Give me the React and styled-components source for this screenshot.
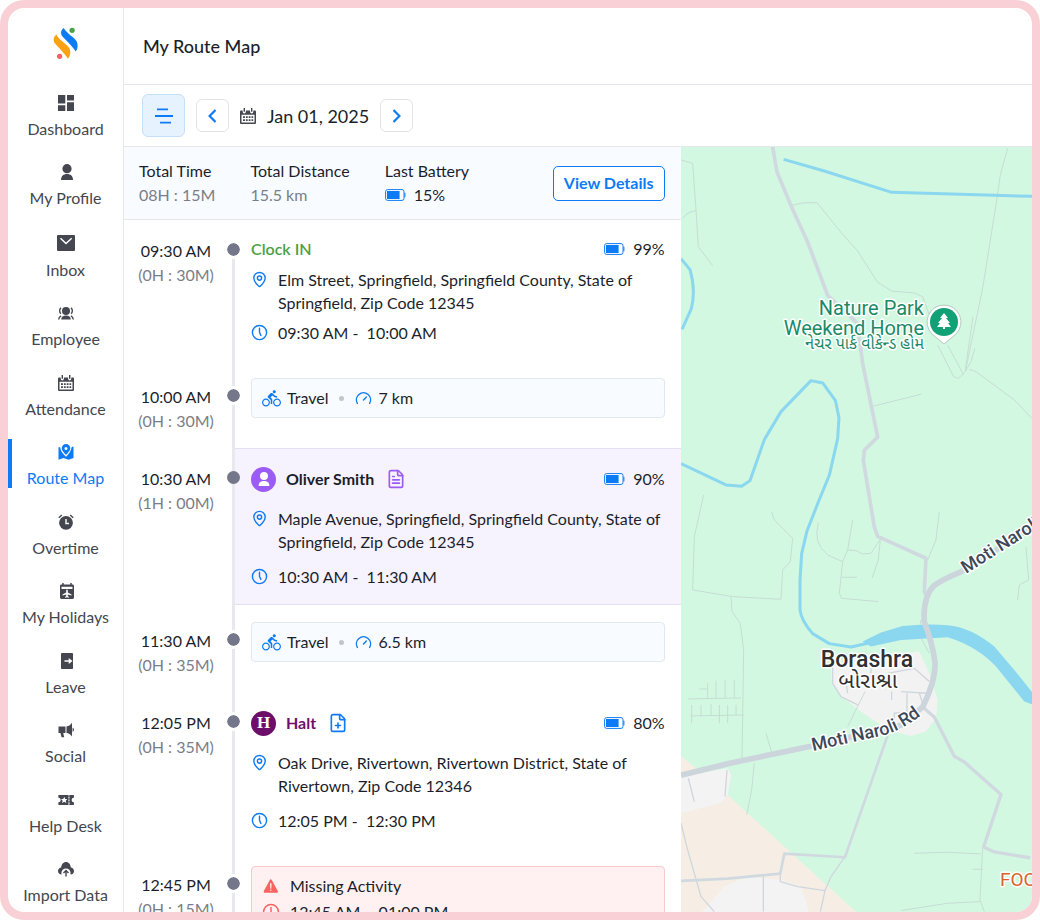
import React from "react";
import styled, { createGlobalStyle } from "styled-components";
import { Clock5, FilePlus, FileText, Gauge, MapPin } from "lucide-react";
import { MdDirectionsBike } from "react-icons/md";
import { IoWarning } from "react-icons/io5";

const colors = {
  ink: "#1c1f2b",
  text: "#44474f",
  muted: "#7b7e88",
  blue: "#0d7bf5",
  green: "#4ba146",
  purple: "#9b5cf6",
  plum: "#6d0f6a",
  red: "#f96460",
  line: "#e6e7ec",
  dot: "#74778a",
  pink: "#f8d0d5",
};

const GlobalStyle = createGlobalStyle`
  *, *::before, *::after {
    box-sizing: border-box;
  }
  body {
    margin: 0;
    background: white;
    color: ${colors.ink};
    font-family: Lato, "Open Sans", sans-serif;
    font-size: 16px;
    line-height: 24px;
  }
  button {
    font: inherit;
    cursor: pointer;
  }
  svg {
    flex: none;
  }
`;

const Frame = styled.div`
  display: flex;
  height: 100vh;
  overflow: hidden;
  background: white;
  border: 8px solid ${colors.pink};
  border-radius: 24px;
`;

/* ---------- sidebar ---------- */

const Sidebar = styled.aside`
  display: flex;
  flex: none;
  flex-direction: column;
  align-items: center;
  width: 116px;
  padding: 19px 0 7px;
  border-right: 1px solid ${colors.line};
`;

const Nav = styled.nav`
  display: flex;
  flex: 1;
  flex-direction: column;
  justify-content: space-between;
  width: 100%;
  padding-top: 30px;
`;

const NavLink = styled.a`
  display: flex;
  flex-direction: column;
  align-items: center;
  gap: 8px;
  padding: 5px 4px 0 0;
  border-left: 4px solid ${(p) => (p.$active ? colors.blue : "transparent")};
  color: ${(p) => (p.$active ? colors.blue : colors.text)};
  line-height: 20px;
  text-decoration: none;
  white-space: nowrap;
`;

/* ---------- header and toolbar ---------- */

const Main = styled.main`
  display: flex;
  flex: 1;
  flex-direction: column;
  min-width: 0;
`;

const Header = styled.header`
  display: flex;
  flex: none;
  align-items: center;
  height: 77px;
  padding: 0 19px;
  border-bottom: 1px solid ${colors.line};
  h1 {
    margin: 0;
    font-size: 18px;
    font-weight: 500;
  }
`;

const Toolbar = styled.div`
  display: flex;
  flex: none;
  align-items: center;
  gap: 11px;
  height: 62px;
  padding: 0 18px;
  border-bottom: 1px solid ${colors.line};
`;

const IconButton = styled.button`
  display: flex;
  align-items: center;
  justify-content: center;
  width: ${(p) => (p.$filled ? 43 : 33)}px;
  height: ${(p) => (p.$filled ? 43 : 33)}px;
  padding: 0;
  border: 1px solid ${(p) => (p.$filled ? "#c3dffa" : "#e1e3e7")};
  border-radius: 6px;
  background: ${(p) => (p.$filled ? "#e7f2ff" : "white")};
  color: ${colors.blue};
`;

const CurrentDate = styled.div`
  display: flex;
  align-items: center;
  gap: 11px;
  color: ${colors.text};
`;

const DateText = styled.time`
  color: ${colors.ink};
  font-size: 18px;
`;

const Body = styled.div`
  display: grid;
  flex: 1;
  grid-template-columns: 19fr 12fr;
  min-height: 0;
`;

const Panel = styled.section`
  min-width: 0;
  overflow: hidden;
`;

/* ---------- summary ---------- */

const Summary = styled.div`
  display: flex;
  align-items: center;
  gap: 35px;
  height: 73px;
  padding: 0 16px 0 15px;
  border-bottom: 1px solid ${colors.line};
  background: #f8fbff;
`;

const Stat = styled.div`
  white-space: nowrap;
  p {
    margin: 0;
  }
`;

const StatValue = styled.p`
  color: ${(p) => (p.$dark ? colors.ink : colors.muted)};
`;

const DetailsButton = styled.button`
  height: 35px;
  margin-left: auto;
  padding: 0 10px;
  border: 1px solid ${colors.blue};
  border-radius: 5px;
  background: white;
  color: ${colors.blue};
  font-weight: 700;
  white-space: nowrap;
`;

const Battery = styled.span`
  display: inline-flex;
  align-items: center;
  gap: 8px;
`;

/* ---------- timeline ---------- */

const Timeline = styled.ol`
  margin: 0;
  padding: 0;
  list-style: none;
`;

const Row = styled.li`
  display: grid;
  grid-template-columns: 108px 3px 1fr;
`;

const Times = styled.div`
  padding: 19px 4px 0 0;
  text-align: center;
  span {
    display: block;
    color: ${colors.muted};
  }
`;

const Rail = styled.div`
  position: relative;
  background: linear-gradient(
    ${(p) => (p.$first ? "white" : "#e8e9ee")} 30px,
    #e8e9ee 30px
  );
  &::after {
    content: "";
    position: absolute;
    top: 20px;
    left: -8px;
    width: 19px;
    height: 19px;
    border: 3px solid ${(p) => (p.$tinted ? "transparent" : "white")};
    border-radius: 50%;
    background: ${colors.dot};
    background-clip: padding-box;
  }
`;

const Visit = styled.div`
  display: flex;
  flex-direction: column;
  gap: ${(p) => (p.$compact ? 7 : 12)}px;
  margin-bottom: ${(p) => (p.$tinted ? 5 : 0)}px;
  padding: 17px 16px ${(p) => (p.$tinted ? 17 : 22)}px;
  background: ${(p) => (p.$tinted ? "#f6f2fe" : "white")};
  box-shadow: ${(p) =>
    p.$tinted ? "inset 0 1px #e4e0f2, inset 0 -1px #e4e0f2" : "none"};
`;

const VisitHead = styled.div`
  display: flex;
  align-items: center;
  gap: 10px;
  min-height: ${(p) => (p.$compact ? 24 : 28)}px;
  margin-bottom: ${(p) => (p.$compact ? 0 : 2)}px;
  ${Battery} {
    margin-left: auto;
  }
  > svg {
    margin-left: 2px;
  }
`;

const VisitTitle = styled.strong`
  color: ${(p) => p.$color};
  font-weight: ${(p) => (p.$medium ? 600 : 700)};
`;

const Avatar = styled.span`
  display: flex;
  align-items: center;
  justify-content: center;
  width: 25px;
  height: 25px;
  border-radius: 50%;
  background: ${(p) => p.$color};
  color: white;
  font: 700 17px "Liberation Serif", serif;
`;

const Detail = styled.div`
  display: flex;
  gap: 10px;
  line-height: 23px;
  white-space: pre-wrap;
  svg {
    margin-top: 3px;
    color: ${(p) => p.$color || colors.blue};
  }
`;

const CardWrap = styled.div`
  padding: 12px 16px 30px;
`;

const TravelCard = styled.div`
  display: flex;
  align-items: center;
  gap: 6px;
  height: 40px;
  padding: 0 10px;
  border: 1px solid #e2e8f0;
  border-radius: 4px;
  background: #f8fbff;
  svg {
    color: ${colors.blue};
  }
`;

const Bullet = styled.span`
  width: 5px;
  height: 5px;
  margin: 0 5px;
  border-radius: 50%;
  background: #c2c5cb;
`;

const MissingCard = styled.div`
  display: flex;
  flex-direction: column;
  gap: 3px;
  padding: 7px 10px;
  border: 1px solid #f9c9cb;
  border-radius: 4px;
  background: #fff1f1;
`;

/* ---------- map ---------- */

const MapPane = styled.section`
  min-width: 0;
  overflow: hidden;
  background: #d2f8e1;
  svg {
    display: block;
    width: 100%;
    height: 100%;
  }
`;

const MapLabel = styled.text`
  fill: ${(p) => p.$color};
  stroke: white;
  stroke-width: 3px;
  stroke-linejoin: round;
  paint-order: stroke;
  font-family: Roboto, "Noto Sans Gujarati", "Noto Sans", sans-serif;
  font-size: ${(p) => p.$size}px;
  font-weight: ${(p) => (p.$medium ? 500 : 400)};
`;

/* ---------- icons ---------- */

const Logo = () => (
  <svg width="25" height="33" viewBox="160 82 76 98">
    <path
      fill="#0d7bf5"
      d="M193 84C183 90 182 102 189 110C196 118 216 136 229 155C236 147 237 131 230 122C221 110 201 100 193 84Z"
    />
    <path
      fill="#fba112"
      d="M170 104C160 112 160 124 167 132C174 141 193 158 205 177C214 168 215 152 208 143C199 131 178 121 170 104Z"
    />
    <circle cx="218" cy="91" r="8" fill="#4ba146" />
    <circle cx="180" cy="170" r="8" fill="#f96460" />
  </svg>
);

const Glyph = ({ children, height = 16, width = 16 }) => (
  <svg
    width={width}
    height={height}
    viewBox={`0 0 ${width} ${height}`}
    fill="currentColor"
    aria-hidden="true"
  >
    {children}
  </svg>
);

const CalendarIcon = () => (
  <Glyph>
    <path
      fillRule="evenodd"
      d="M1 2.400h1.700v1.400a1.600 1.600 0 0 0 3.200 0V2.400h4.200v1.400a1.600 1.600 0 0 0 3.200 0V2.400H15a1 1 0 0 1 1 1V15a1 1 0 0 1-1 1H1a1 1 0 0 1-1-1V3.400a1 1 0 0 1 1-1zM1.500 6.800v7.700h13V6.800z"
    />
    <path d="M3.600 0h1.400v3.800H3.600zM11 0h1.400v3.800H11zM3 8.200h1.900v1.700H3zM5.900 8.200h1.800v1.700H5.900zM8.700 8.200h1.800v1.700H8.700zM11.500 8.200h1.700v1.700h-1.700zM3 11.300h1.900V13H3zM5.900 11.300h1.800V13H5.900zM8.700 11.300h1.800V13H8.700zM11.500 11.300h1.700V13h-1.700z" />
  </Glyph>
);

const BatteryIcon = () => (
  <svg width="21" height="12" viewBox="0 0 21 12" aria-hidden="true">
    <rect x=".6" y=".6" width="18.400" height="10.800" rx="2" fill="white" stroke={colors.blue} strokeWidth="1" />
    <path d="M2 2h12.600v8H2z" fill={colors.blue} />
    <path d="M19.400 3.800h1v4.400h-1z" fill={colors.blue} />
  </svg>
);

const Chevron = ({ d }) => (
  <svg width="9" height="14" viewBox="0 0 9 14" fill="none" stroke="currentColor" strokeWidth="2.200">
    <path d={d} />
  </svg>
);

const navItems = [
  {
    label: "Dashboard",
    icon: (
      <Glyph>
        <path d="M0 0h7.300v8.600H0zM0 10.300h7.300V16H0zM9 0h7v5.400H9zM9 7.200h7V16H9z" />
      </Glyph>
    ),
  },
  {
    label: "My Profile",
    icon: (
      <Glyph>
        <circle cx="9" cy="4.700" r="4.600" />
        <path d="M3 16c0-4 2.500-6 6-6s6 2 6 6z" />
      </Glyph>
    ),
  },
  {
    label: "Inbox",
    icon: (
      <Glyph width={18} height={18}>
        <rect y="1" width="18" height="16" rx="1" />
        <path d="M3.500 4.200 9 9.500l5.700-5.300" fill="none" stroke="white" strokeWidth="1.500" />
      </Glyph>
    ),
  },
  {
    label: "Employee",
    icon: (
      <Glyph>
        <circle cx="8" cy="6" r="4" />
        <path d="M3.200 14.500c0-2.700 2-4.100 4.800-4.100s4.800 1.400 4.800 4.100z" />
        <path
          d="M3 2.800C1.200 4 1.200 7.500 3 8.700M13 2.800c1.800 1.200 1.800 4.700 0 5.900M.7 14.500c.1-1.800.9-3 2.400-3.700M15.300 14.500c-.1-1.800-.9-3-2.400-3.700"
          fill="none"
          stroke="currentColor"
          strokeWidth="1.400"
        />
      </Glyph>
    ),
  },
  { label: "Attendance", icon: <CalendarIcon /> },
  {
    label: "Route Map",
    active: true,
    icon: (
      <Glyph>
        <path
          fillRule="evenodd"
          d="M8 0a4.300 4.300 0 0 1 4.300 4.300C12.300 7 8 11 8 11S3.700 7 3.700 4.300A4.300 4.300 0 0 1 8 0zm0 2.900a1.500 1.500 0 1 0 0 3 1.500 1.500 0 0 0 0-3z"
        />
        <path d="M.5 3.300h1.800C2.300 7 5.500 10.300 8 12.700c2.500-2.400 5.200-5.700 5.700-9.700l1.800-.6V14l-4.800 1.800-5.300-1.900L.5 15.700z" />
      </Glyph>
    ),
  },
  {
    label: "Overtime",
    icon: (
      <Glyph>
        <circle cx="8" cy="8.800" r="6.900" />
        <path d="M8 5v4.500h3" fill="none" stroke="white" strokeWidth="1.400" />
        <path d="M.8 3.700 3.800 1M15.200 3.700 12.200 1" stroke="currentColor" strokeWidth="1.400" />
      </Glyph>
    ),
  },
  {
    label: "My Holidays",
    icon: (
      <Glyph>
        <path
          fillRule="evenodd"
          d="M4.200 0h1.500v1.600h6.600V0h1.500v1.600h.8A1.400 1.400 0 0 1 16 3v11.600a1.400 1.400 0 0 1-1.400 1.400H3.400A1.400 1.400 0 0 1 2 14.600V3a1.400 1.400 0 0 1 1.400-1.400h.8zM3.500 3.800V6h11V3.800z"
        />
        <path
          fill="white"
          d="M9 6.600c.6 0 .8.600.8 1.200v1.600l3.700 2.100v1.100l-3.700-1v1.500l1.200.9v.8L9 14.300l-2 .5V14l1.200-.9v-1.500l-3.700 1v-1.100l3.700-2.100V7.800c0-.6.2-1.200.8-1.200z"
        />
      </Glyph>
    ),
  },
  {
    label: "Leave",
    icon: (
      <Glyph>
        <rect x="3" width="12" height="16" rx=".8" />
        <path d="M6.500 7.200h4.200V5L14.600 8l-3.900 3V8.800H6.500z" fill="white" />
      </Glyph>
    ),
  },
  {
    label: "Social",
    icon: (
      <Glyph>
        <path d="M14 .8v13.800C12.400 12.200 10.700 11.200 8.500 11V4.400C10.700 4.200 12.400 3.200 14 .8zM.5 4.400h7v6.600H5.200l1 4.200H3.600l-1.200-4.200H.5zM14.600 5.700c1.800.3 1.800 3.700 0 4z" />
      </Glyph>
    ),
  },
  {
    label: "Help Desk",
    icon: (
      <Glyph>
        <path d="M.4 3h10v10h-10v-2.700a2.300 2.300 0 0 0 0-4.600zM11.500 3h4.400v2.700a2.300 2.300 0 0 0 0 4.600V13h-4.400z" />
        <path d="m6.200 4.700 1 2.200 2.200.2-1.700 1.600.6 2.300-2.100-1.200L4 11l.7-2.300L3 7.100l2.200-.2z" fill="white" />
        <path d="M11 3.500v9" stroke="currentColor" strokeWidth="1.200" strokeDasharray="1.400 1.400" />
      </Glyph>
    ),
  },
  {
    label: "Import Data",
    icon: (
      <Glyph>
        <path d="M3.700 13.500a5 5 0 0 1 9 .1c2-.2 3.300-1.500 3.300-3.600 0-2-1.300-3.400-3.200-3.600C12.500 3.300 10.700 1 8 1S3.500 3.300 3.200 6.400C1.300 6.600 0 8 0 10c0 2.100 1.500 3.500 3.700 3.500z" />
        <circle cx="8" cy="12" r="4.600" fill="white" />
        <path d="M8 15.500V9.600M5.500 12 8 9.500l2.500 2.500" fill="none" stroke="currentColor" strokeWidth="1.400" />
      </Glyph>
    ),
  },
];

/* ---------- rows ---------- */

const BatteryLevel = ({ children }) => (
  <Battery>
    <BatteryIcon />
    {children}
  </Battery>
);

const TimelineRow = ({ time, length, first, tinted, children }) => (
  <Row>
    <Times>
      {time}
      <span>({length})</span>
    </Times>
    <Rail $first={first} $tinted={tinted} />
    {children}
  </Row>
);

const VisitDetails = ({ address, hours }) => (
  <>
    <Detail>
      <MapPin size={17} strokeWidth={2} />
      {address}
    </Detail>
    <Detail>
      <Clock5 size={17} strokeWidth={2} />
      {hours}
    </Detail>
  </>
);

const Travel = ({ distance }) => (
  <CardWrap>
    <TravelCard>
      <MdDirectionsBike size={19} />
      Travel
      <Bullet />
      <Gauge size={17} />
      {distance}
    </TravelCard>
  </CardWrap>
);

const RouteMap = () => (
  <svg role="img" aria-label="Map of Borashra">
    <defs>
      <path id="road-west" d="M132 604 L204 588 Q230 580 256 554" />
      <path id="road-east" d="M285 427 L400 354" />
    </defs>

    <g transform="scale(.3333)" fill="none" strokeLinejoin="round">
      {/* built-up areas */}
      <g transform="translate(0 1059)">
        <path fill="#f6eee4" d="M-5 765L50 808L140 885L530 1240H-5z" />
        <path fill="#f4f3f4" d="M-5 830L140 805L150 825L140 885L120 908L20 935L-5 940z" />
        <path fill="#f4f3f4" d="M60 1240L130 1160L200 1130L300 1140L360 1160L385 1240z" />
        <path
          fill="#f3f2f3"
          d="M450 500L530 470L715 455L745 520L770 600L765 655L735 695L690 708L620 690L540 635L480 590L452 545z"
        />
      </g>

      {/* lanes */}
      <g stroke="#c6ddd3" strokeWidth="3">
        <g transform="translate(0 -6)">
          <path d="M0 45L35 55L45 195L52 305L95 362M45 197Q20 200 5 220" />
          <path d="M330 181Q370 170 408 173L480 262L530 318L590 412L632 438L700 444L725 455L745 510" />
          <path d="M980 10L958 90L945 180L905 430L853 680M876 515L853 675M882 610L870 650L853 680L832 700L818 695L770 600M800 600L848 690M865 673L885 680L1000 765L1053 820" />
          <path d="M578 783L720 748" />
        </g>
        <g transform="translate(0 1059)">
          <path d="M68 -15L40 110L35 270L155 290L300 298L305 210L328 185L335 115L280 60L272 35" />
          <path d="M150 290L153 335L178 370L188 450L183 780" />
          <path d="M20 597L180 594M28 648L190 645M80 550V597M105 542V595M132 540V594M160 540V594M32 615V670M60 615V648M90 612V648M115 615V670M140 615V670M165 615V645M55 567H78" />
          <path d="M412 68Q395 130 440 165L485 185L500 150L525 152L545 162L570 160L598 118L592 180L573 235M515 60L500 150M485 185L475 280L482 295L592 305M482 232H528" />
          <path d="M775 35L765 120L740 180M720 360L712 400L745 460M1035 140L1043 240L1015 255L1010 300" />
          <path d="M700 1060L800 1057L900 1062M905 1045L897 1200L910 1235M660 1232L800 1210L900 1205M875 1108H905" />
          <path d="M500 680L552 575M255 700L272 757M220 790L212 870L197 945" />
        </g>
      </g>
      <g stroke="#cfd6dd" strokeWidth="4" transform="translate(0 1059)">
        <path d="M22 835L40 905M138 810L132 890M0 970L20 1050L60 1190L100 1235M247 1130V1235M298 1120V1145L350 1160L432 1172L418 1235M432 1172L450 1130L492 1070" />
        <path d="M455 500V550L480 590L530 615M500 580L495 545M570 505V520M620 520L700 505L745 545M660 575L740 580M632 575V600M678 580V640M640 670V640L690 635M715 580L725 610" />
      </g>

      {/* water */}
      <g stroke="#8ad7ef" strokeWidth="9">
        <path d="M308 37L430 72L632 136L940 145L1056 148" />
        <path d="M0 335L27 368Q45 430 31 485L3 547" />
        <path d="M0 950L135 1014L182 1018L207 1001L250 878L300 794L390 701L425 708L463 760L474 812L470 875L445 985L412 1065L378 1152L362 1220L357 1300L357 1388Q360 1420 395 1460L445 1490L510 1500L560 1489" />
      </g>
      <path
        fill="#8ad7ef"
        transform="translate(0 1059)"
        d="M545 425L600 398L665 378Q740 370 800 376Q870 382 940 440L1000 510L1056 580V614L1030 605L945 500Q890 440 800 412L660 420L570 440z"
      />

      {/* roads */}
      <g stroke="#d0d9e0" strokeWidth="10">
        <path d="M275 0L288 75L330 176L380 285L440 445L530 530L545 650L590 870L550 910L547 940L580 1140L590 1168L735 1234L730 1335L740 1350" strokeWidth="11" />
        <path d="M725 1680L760 1710L820 1828L850 1845L960 1943L908 2100L940 2115L1048 2133" />
        <path d="M620 1765L492 2131L310 2120L298 2180L140 2195L0 2202" strokeWidth="8" />
      </g>
      <g stroke="#ccd4dc" strokeWidth="17">
        <path d="M0 1885L150 1848L390 1798L660 1735L725 1680Q765 1600 762 1545Q755 1490 730 1425Q725 1350 760 1315Q790 1295 840 1275L1053 1140" />
      </g>
    </g>

    <MapLabel x="243" y="168" $size={20} $color="#1b8a67" textAnchor="end">Nature Park</MapLabel>
    <MapLabel x="243" y="188" $size={20} $color="#1b8a67" textAnchor="end">Weekend Home</MapLabel>
    <MapLabel x="243" y="202" $size={16} $color="#1b8a67" textAnchor="end">નેચર પાર્ક વીકેન્ડ હોમ</MapLabel>
    <MapLabel x="186" y="520" $size={23} $color="#2f3033" $medium textAnchor="middle">Borashra</MapLabel>
    <MapLabel x="187" y="541" $size={22} $color="#2f3033" textAnchor="middle">બોરાશ્રા</MapLabel>
    <MapLabel $size={18} $color="#3c4858" $medium>
      <textPath href="#road-west">Moti Naroli Rd</textPath>
    </MapLabel>
    <MapLabel $size={18} $color="#3c4858" $medium>
      <textPath href="#road-east">Moti Naroli</textPath>
    </MapLabel>
    <MapLabel x="319" y="739" $size={19} $color="#d5652a">FOO</MapLabel>

    <path
      d="M263 158a17 17 0 0 1 12 29L263 197l-12-10a17 17 0 0 1 12-29z"
      fill="white"
      stroke="#b9c9c1"
      strokeWidth="1"
    />
    <circle cx="263" cy="175" r="14" fill="#12a176" />
    <path d="M263 166l4 5h-2l4 5h-2l3 4h-6v2h-2v-2h-6l3-4h-2l4-5h-2z" fill="white" />
  </svg>
);

export default function App() {
  return (
    <>
      <GlobalStyle />
      <Frame>
        <Sidebar>
          <Logo />
          <Nav>
            {navItems.map((item) => (
              <NavLink key={item.label} href="#" $active={item.active}>
                {item.icon}
                {item.label}
              </NavLink>
            ))}
          </Nav>
        </Sidebar>

        <Main>
          <Header>
            <h1>My Route Map</h1>
          </Header>
          <Toolbar>
            <IconButton $filled aria-label="Filter">
              <svg width="18" height="16" viewBox="0 0 18 16" stroke="currentColor" strokeWidth="1.800">
                <path d="M2 1.400h11M0 8h18M5 14.600h11" />
              </svg>
            </IconButton>
            <IconButton aria-label="Previous day">
              <Chevron d="M7.500 1 1.600 7l5.900 6" />
            </IconButton>
            <CurrentDate>
              <CalendarIcon />
              <DateText dateTime="2025-01-01">Jan 01, 2025</DateText>
            </CurrentDate>
            <IconButton aria-label="Next day">
              <Chevron d="M1.500 1l5.900 6-5.900 6" />
            </IconButton>
          </Toolbar>

          <Body>
            <Panel>
              <Summary>
                <Stat>
                  <p>Total Time</p>
                  <StatValue>08H : 15M</StatValue>
                </Stat>
                <Stat>
                  <p>Total Distance</p>
                  <StatValue>15.5 km</StatValue>
                </Stat>
                <Stat>
                  <p>Last Battery</p>
                  <StatValue $dark>
                    <BatteryLevel>15%</BatteryLevel>
                  </StatValue>
                </Stat>
                <DetailsButton>View Details</DetailsButton>
              </Summary>

              <Timeline>
                <TimelineRow time="09:30 AM" length="0H : 30M" first>
                  <Visit $compact>
                    <VisitHead $compact>
                      <VisitTitle $color={colors.green} $medium>Clock IN</VisitTitle>
                      <BatteryLevel>99%</BatteryLevel>
                    </VisitHead>
                    <VisitDetails
                      address="Elm Street, Springfield, Springfield County, State of Springfield, Zip Code 12345"
                      hours="09:30 AM -  10:00 AM"
                    />
                  </Visit>
                </TimelineRow>

                <TimelineRow time="10:00 AM" length="0H : 30M">
                  <Travel distance="7 km" />
                </TimelineRow>

                <TimelineRow time="10:30 AM" length="1H : 00M" tinted>
                  <Visit $tinted>
                    <VisitHead>
                      <Avatar $color={colors.purple}>
                        <svg width="12" height="14" viewBox="0 0 12 14" fill="currentColor">
                          <circle cx="6" cy="4" r="4" />
                          <path d="M.6 14c0-3.600 2-5 5.400-5s5.400 1.400 5.400 5z" />
                        </svg>
                      </Avatar>
                      <VisitTitle $color={colors.ink}>Oliver Smith</VisitTitle>
                      <FileText size={20} color={colors.purple} />
                      <BatteryLevel>90%</BatteryLevel>
                    </VisitHead>
                    <VisitDetails
                      address="Maple Avenue, Springfield, Springfield County, State of Springfield, Zip Code 12345"
                      hours="10:30 AM -  11:30 AM"
                    />
                  </Visit>
                </TimelineRow>

                <TimelineRow time="11:30 AM" length="0H : 35M">
                  <Travel distance="6.5 km" />
                </TimelineRow>

                <TimelineRow time="12:05 PM" length="0H : 35M">
                  <Visit>
                    <VisitHead>
                      <Avatar $color={colors.plum}>H</Avatar>
                      <VisitTitle $color={colors.plum}>Halt</VisitTitle>
                      <FilePlus size={20} color={colors.blue} />
                      <BatteryLevel>80%</BatteryLevel>
                    </VisitHead>
                    <VisitDetails
                      address="Oak Drive, Rivertown, Rivertown District, State of Rivertown, Zip Code 12346"
                      hours="12:05 PM -  12:30 PM"
                    />
                  </Visit>
                </TimelineRow>

                <TimelineRow time="12:45 PM" length="0H : 15M">
                  <CardWrap>
                    <MissingCard>
                      <Detail $color={colors.red}>
                        <IoWarning size={18} />
                        Missing Activity
                      </Detail>
                      <Detail $color={colors.red}>
                        <Clock5 size={18} />
                        {"12:45 AM -  01:00 PM"}
                      </Detail>
                    </MissingCard>
                  </CardWrap>
                </TimelineRow>
              </Timeline>
            </Panel>

            <MapPane>
              <RouteMap />
            </MapPane>
          </Body>
        </Main>
      </Frame>
    </>
  );
}
